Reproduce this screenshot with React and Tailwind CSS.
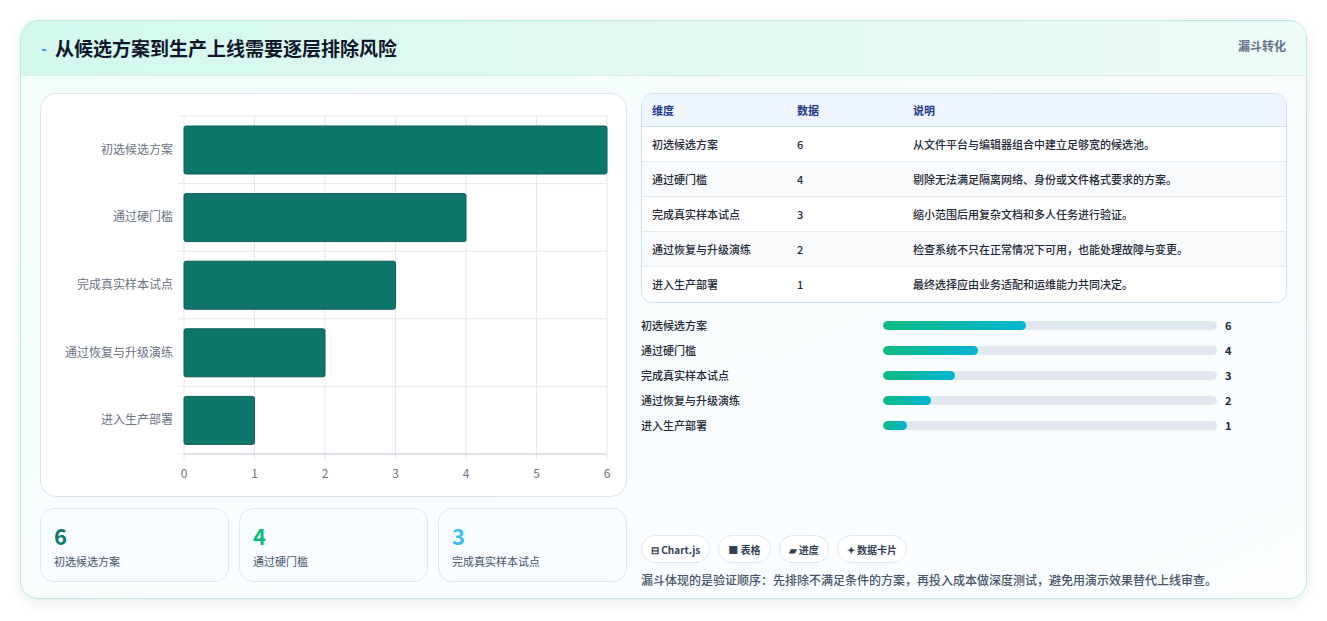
const F = { fontFamily: '"Noto Sans CJK SC","Noto Sans",sans-serif' };
const cats = [["初选候选方案",6,"从文件平台与编辑器组合中建立足够宽的候选池。"],["通过硬门槛",4,"剔除无法满足隔离网络、身份或文件格式要求的方案。"],["完成真实样本试点",3,"缩小范围后用复杂文档和多人任务进行验证。"],["通过恢复与升级演练",2,"检查系统不只在正常情况下可用，也能处理故障与变更。"],["进入生产部署",1,"最终选择应由业务适配和运维能力共同决定。"]];

function Chart() {
  const x0 = 143, x1 = 566, y0 = 22, y1 = 360, step = (x1 - x0) / 6, rh = (y1 - y0) / 5;
  return (
    <svg width="586" height="403" className="block">
      {[0,1,2,3,4,5,6].map(i => (
        <g key={i}>
          <line x1={x0+i*step} x2={x0+i*step} y1={y0} y2={y1+6} stroke="#e5e7eb" />
          <text x={x0+i*step} y={y1+24} textAnchor="middle" fontSize="12" fill="#6b7280" style={F}>{i}</text>
        </g>
      ))}
      {[0,1,2,3,4,5].map(i => <line key={i} x1={x0-6} x2={x1} y1={y0+i*rh} y2={y0+i*rh} stroke="#e5e7eb" />)}
      <line x1={x0} x2={x1} y1={y1} y2={y1} stroke="#cbd5e1" />
      {cats.map(([n,v],i) => (
        <g key={n}>
          <rect x={x0} y={y0+i*rh+10} width={v*step} height={48} rx="2" fill="#0f766e" stroke="#115e59" />
          <text x={x0-11} y={y0+i*rh+rh/2+4} textAnchor="end" fontSize="12" fill="#6b7280" style={F}>{n}</text>
        </g>
      ))}
    </svg>
  );
}

export default function App() {
  return (
    <div style={F} className="w-[1327px] h-[621px] bg-white pt-[20px] px-[20px]">
      <div className="h-[579px] rounded-[18px] border border-[#b9ece0] bg-gradient-to-br from-[#f0fdf9] via-[#f8fcfd] to-[#fbfdff] shadow-[0_4px_14px_rgba(0,0,0,0.08)] overflow-hidden">
        <div className="h-[55px] flex items-center justify-between px-[20px] bg-gradient-to-r from-[#d3f8ee] to-[#eefcf8] border-b border-[#d6efe9]">
          <div className="flex items-center gap-[8px]">
            <span className="text-[10px] text-[#2563eb]">⌁</span>
            <span className="text-[19px] font-bold text-[#0f172a]">从候选方案到生产上线需要逐层排除风险</span>
          </div>
          <span className="text-[12px] font-semibold text-[#64748b] self-start mt-[16px]">漏斗转化</span>
        </div>
        <div className="flex gap-[14px] px-[19px] pt-[17px]">
          <div className="w-[587px] flex flex-col gap-[11px]">
            <div className="h-[404px] rounded-[16px] border border-[#dbe5ef] bg-white"><Chart /></div>
            <div className="grid grid-cols-3 gap-[10px]">
              {[["6","#0f766e","初选候选方案"],["4","#10b981","通过硬门槛"],["3","#38bdf8","完成真实样本试点"]].map(([v,c,l]) => (
                <div key={l} className="h-[74px] rounded-[14px] border border-[#dbe7f5] bg-[#f8fbff] px-[13px] pt-[10px]">
                  <div className="text-[22px] font-bold leading-[32px]" style={{color:c}}>{v}</div>
                  <div className="text-[11px] text-[#475569] mt-[2px]">{l}</div>
                </div>
              ))}
            </div>
          </div>
          <div className="flex-1 flex flex-col">
            <div className="rounded-[12px] border border-[#cfe0ee] overflow-hidden bg-white text-[11px]">
              <div className="h-[33px] flex items-center bg-[#eef5ff] text-[#1e3a8a] font-semibold border-b border-[#cfe0ee]">
                <span className="w-[155px] pl-[10px]">维度</span><span className="w-[116px]">数据</span><span>说明</span>
              </div>
              {cats.map(([n,v,d],i) => (
                <div key={n} className={`h-[35px] flex items-center text-[#1f2937] font-medium ${i<4?"border-b border-[#e5edf4]":""} ${i%2?"bg-[#f8fafc]":"bg-white"}`}>
                  <span className="w-[155px] pl-[10px]">{n}</span><span className="w-[116px]">{v}</span><span>{d}</span>
                </div>
              ))}
            </div>
            <div className="mt-[10px] flex flex-col">
              {cats.map(([n,v]) => (
                <div key={n} className="h-[25px] flex items-center text-[11px] font-medium text-[#1f2937]">
                  <span className="w-[242px]">{n}</span>
                  <div className="w-[334px] h-[9px] rounded-full bg-[#e2e8f0] overflow-hidden">
                    <div className="h-full rounded-full bg-gradient-to-r from-[#10b981] to-[#06b6d4]" style={{width:`${v/14*100}%`}} />
                  </div>
                  <span className="ml-[8px] font-bold">{v}</span>
                </div>
              ))}
            </div>
            <div className="mt-[97px] flex gap-[8px] text-[10px] text-[#334155] font-semibold">
              {["⊟ Chart.js","■ 表格","▰ 进度","✦ 数据卡片"].map(t => (
                <span key={t} className="h-[28px] px-[9px] flex items-center rounded-full border border-[#e2e8f0] bg-white">{t}</span>
              ))}
            </div>
            <div className="mt-[8px] text-[12px] font-medium text-[#475569]">漏斗体现的是验证顺序：先排除不满足条件的方案，再投入成本做深度测试，避免用演示效果替代上线审查。</div>
          </div>
        </div>
      </div>
    </div>
  );
}
